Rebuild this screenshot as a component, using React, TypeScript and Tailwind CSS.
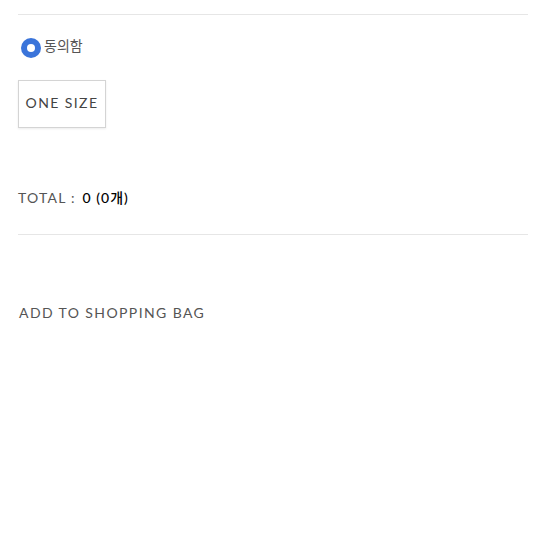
import React from "react";

export default function App() {
  return (
    <div
      className="w-[555px] h-[555px] bg-white overflow-hidden"
      style={{ fontFamily: '"Lato", "Noto Sans CJK KR", sans-serif' }}
    >
      <div className="mx-[18px] pt-[14px]">
        <div className="h-px bg-[#e6e6e6] w-[510px]" />

        <label className="flex items-center mt-[22px] h-[21px]">
          <span className="w-[20px] h-[20px] rounded-full bg-[#3a74da] flex items-center justify-center ml-[3px]">
            <span className="w-[8px] h-[8px] rounded-full bg-white" />
          </span>
          <span className="ml-[3px] text-[14px] text-[#555] leading-none -mt-[3px]">동의함</span>
        </label>

        <div className="mt-[22px] w-[88px] h-[48px] border border-[#d4d4d4] flex items-center justify-center shadow-[0_1px_2px_rgba(0,0,0,0.08)]">
          <span className="text-[14px] tracking-[1.4px] text-[#444] leading-none -mt-[3px]">ONE SIZE</span>
        </div>

        <div className="mt-[63px] text-[14px] leading-none tracking-[1.2px] flex items-center">
          <span className="text-[#555]">TOTAL :</span>
          <span className="ml-[7px] text-black font-medium tracking-[1px]">0 (0개)</span>
        </div>

        <div className="mt-[29px] h-px bg-[#e6e6e6] w-[510px]" />

        <div className="mt-[71px] ml-[1px] text-[14px] leading-none tracking-[1.4px] text-[#555]">
          ADD TO SHOPPING BAG
        </div>
      </div>
    </div>
  );
}
